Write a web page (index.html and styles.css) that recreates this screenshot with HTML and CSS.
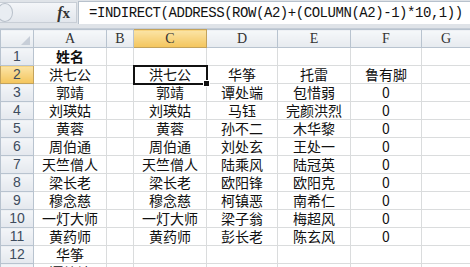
FILE: index.html
```html
<!DOCTYPE html>
<html lang="zh-CN">
<head>
<meta charset="UTF-8" />
<title>INDIRECT</title>
<link rel="stylesheet" href="styles.css">
</head>
<body>

<div class="fbar">
  <div class="namebox">
    <span class="knob"></span>
    <span class="fx"><i>f</i>x</span>
  </div>
  <div class="formula">=INDIRECT(ADDRESS(ROW(A2)+(COLUMN(A2)-1)*10,1))</div>
</div>

<table class="sheet">
  <colgroup>
    <col class="c-hdr"><col class="c-a"><col class="c-b"><col class="c-c"><col class="c-d"><col class="c-e"><col class="c-f"><col class="c-g">
  </colgroup>
  <tr class="colhdr">
    <th class="corner"><span class="tri"></span></th>
    <th>A</th><th>B</th><th class="sel">C</th><th>D</th><th>E</th><th>F</th><th>G</th>
  </tr>
  <tr><th>1</th><td class="bold">姓名</td><td></td><td></td><td></td><td></td><td></td><td></td></tr>
  <tr><th class="sel">2</th><td>洪七公</td><td></td><td class="active">洪七公<span class="handle"></span></td><td>华筝</td><td>托雷</td><td>鲁有脚</td><td></td></tr>
  <tr><th>3</th><td>郭靖</td><td></td><td>郭靖</td><td>谭处端</td><td>包惜弱</td><td>0</td><td></td></tr>
  <tr><th>4</th><td>刘瑛姑</td><td></td><td>刘瑛姑</td><td>马钰</td><td>完颜洪烈</td><td>0</td><td></td></tr>
  <tr><th>5</th><td>黄蓉</td><td></td><td>黄蓉</td><td>孙不二</td><td>木华黎</td><td>0</td><td></td></tr>
  <tr><th>6</th><td>周伯通</td><td></td><td>周伯通</td><td>刘处玄</td><td>王处一</td><td>0</td><td></td></tr>
  <tr><th>7</th><td>天竺僧人</td><td></td><td>天竺僧人</td><td>陆乘风</td><td>陆冠英</td><td>0</td><td></td></tr>
  <tr><th>8</th><td>梁长老</td><td></td><td>梁长老</td><td>欧阳锋</td><td>欧阳克</td><td>0</td><td></td></tr>
  <tr><th>9</th><td>穆念慈</td><td></td><td>穆念慈</td><td>柯镇恶</td><td>南希仁</td><td>0</td><td></td></tr>
  <tr><th>10</th><td>一灯大师</td><td></td><td>一灯大师</td><td>梁子翁</td><td>梅超风</td><td>0</td><td></td></tr>
  <tr><th>11</th><td>黄药师</td><td></td><td>黄药师</td><td>彭长老</td><td>陈玄风</td><td>0</td><td></td></tr>
  <tr><th>12</th><td>华筝</td><td></td><td></td><td></td><td></td><td></td><td></td></tr>
  <tr><th>13</th><td>谭处端</td><td></td><td></td><td></td><td></td><td></td><td></td></tr>
</table>

</body>
</html>
```

FILE: styles.css
```css
body {
  margin: 0;
  width: 470px;
  height: 267px;
  overflow: hidden;
  background: #fff;
  font-family: "Noto Sans CJK SC", "Liberation Sans", sans-serif;
}
.fbar {
  display: flex;
  height: 29px;
  box-sizing: border-box;
  padding-top: 1px;
  background: #dfe3e8;
  border-bottom: 1px solid #c4ccd6;
}
.namebox {
  width: 77px;
  height: 21px;
  margin-top: 1px;
  display: flex;
  align-items: center;
  justify-content: space-between;
  background: linear-gradient(#f4f6f9, #e2e6ec);
  border: 1px solid #c8ced6;
  border-left: none;
  box-sizing: border-box;
}
.knob {
  width: 14px;
  height: 17px;
  margin-left: -3px;
  border-radius: 50%;
  border: 1px solid #b8c0ca;
  background: #e9edf2;
}
.fx {
  font-family: "Liberation Serif", serif;
  font-weight: bold;
  font-size: 15px;
  color: #333;
  margin-right: 6px;
}
.fx i {
  font-size: 16px;
}
.formula {
  flex: 1;
  height: 22px;
  margin-left: 1px;
  padding-left: 10px;
  background: #fff;
  border-top: 1px solid #b7c1cc;
  border-left: 1px solid #b7c1cc;
  font-family: "Liberation Mono", monospace;
  font-size: 14px;
  letter-spacing: -0.45px;
  line-height: 22px;
  color: #111;
  white-space: nowrap;
}
.sheet {
  border-collapse: collapse;
  table-layout: fixed;
  width: 470px;
}
.c-hdr { width: 33px; }
.c-a { width: 73px; }
.c-b { width: 27px; }
.c-c { width: 73px; }
.c-d { width: 71px; }
.c-e { width: 73px; }
.c-f { width: 71px; }
.c-g { width: 49px; }
.sheet tr {
  height: 18px;
}
.sheet td {
  height: 17px;
  padding: 0;
  border: 1px solid #dadcdd;
  text-align: center;
  font-size: 14px;
  line-height: 17px;
  color: #111;
  white-space: nowrap;
}
.sheet td.bold {
  font-weight: bold;
}
.sheet th {
  padding: 0;
  font-weight: normal;
  background: linear-gradient(#f3f5f8, #e4e8ee);
  border: 1px solid #b8c3cf;
  color: #3e4c5e;
  font-family: "Liberation Sans", sans-serif;
  font-size: 14px;
  line-height: 17px;
}
.colhdr th {
  font-family: "Liberation Serif", serif;
  color: #333;
  background: linear-gradient(#f6f8fa, #e6eaef);
}
.sheet th.sel {
  background: linear-gradient(#fbe4a6, #f4c55c);
  border-color: #c2a25c;
}
.corner {
  position: relative;
}
.tri {
  position: absolute;
  right: 3px;
  bottom: 2px;
  width: 0;
  height: 0;
  border-left: 9px solid transparent;
  border-bottom: 9px solid #c7ced8;
}
.sheet td.active {
  position: relative;
  outline: 2px solid #111;
  outline-offset: -1px;
}
.handle {
  position: absolute;
  right: -4px;
  bottom: -4px;
  width: 5px;
  height: 5px;
  background: #111;
  border: 1px solid #fff;
}
```
